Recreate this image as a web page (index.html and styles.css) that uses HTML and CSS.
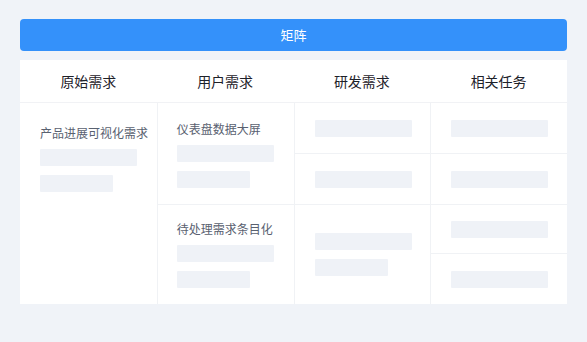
FILE: index.html
```html
<!DOCTYPE html>
<html lang="zh">
<head>
<meta charset="utf-8">
<link rel="stylesheet" href="styles.css">
</head>
<body>
<div class="page">
  <div class="bar">矩阵</div>
  <div class="matrix">
    <div class="head">
      <div class="th">原始需求</div>
      <div class="th">用户需求</div>
      <div class="th">研发需求</div>
      <div class="th">相关任务</div>
    </div>
    <div class="body">
      <div class="col">
        <div class="cell text-cell c1">
          <div class="label">产品进展可视化需求</div>
          <div class="sk long"></div>
          <div class="sk short"></div>
        </div>
      </div>
      <div class="col">
        <div class="cell text-cell c2a">
          <div class="label">仪表盘数据大屏</div>
          <div class="sk long"></div>
          <div class="sk short"></div>
        </div>
        <div class="cell text-cell c2b">
          <div class="label">待处理需求条目化</div>
          <div class="sk long"></div>
          <div class="sk short"></div>
        </div>
      </div>
      <div class="col">
        <div class="cell mid h50"><div class="sk long"></div></div>
        <div class="cell mid h51"><div class="sk long"></div></div>
        <div class="cell mid grow"><div class="sk long"></div><div class="sk short"></div></div>
      </div>
      <div class="col">
        <div class="cell mid h50"><div class="sk long"></div></div>
        <div class="cell mid h51"><div class="sk long"></div></div>
        <div class="cell mid h49"><div class="sk long"></div></div>
        <div class="cell mid grow"><div class="sk long"></div></div>
      </div>
    </div>
  </div>
</div>
</body>
</html>
```
FILE: styles.css
```css
* { box-sizing: border-box; }
html, body { margin: 0; padding: 0; }
body {
  background: #f0f3f8;
  font-family: "Noto Sans CJK SC", "Noto Sans", sans-serif;
  width: 587px;
  height: 342px;
  overflow: hidden;
}
.page {
  padding: 19px 20px 0 20px;
}
.bar {
  height: 32px;
  background: #3491fa;
  border-radius: 4px;
  color: #ffffff;
  font-size: 13px;
  line-height: 32px;
  text-align: center;
}
.matrix {
  margin-top: 9px;
  width: 547px;
  background: #ffffff;
}
.head {
  display: grid;
  grid-template-columns: repeat(4, 1fr);
  height: 43px;
  border-bottom: 1px solid #f1f2f5;
}
.th {
  display: flex;
  align-items: center;
  justify-content: center;
  font-size: 14px;
  color: #1d2129;
}
.body {
  display: grid;
  grid-template-columns: repeat(4, 1fr);
  height: 201px;
}
.col {
  display: flex;
  flex-direction: column;
  border-left: 1px solid #f0f2f5;
}
.col:first-child { border-left: none; }
.cell {
  border-top: 1px solid #f0f2f5;
  padding-left: 20px;
}
.cell:first-child { border-top: none; }
.text-cell {
  display: flex;
  flex-direction: column;
  gap: 8px;
}
.c1 { flex: 1; padding-top: 21px; }
.c2a { height: 101px; padding-top: 17px; padding-left: 19px; }
.c2b { flex: 1; padding-top: 15px; padding-left: 19px; }
.label {
  font-size: 12px;
  line-height: 17px;
  color: #596170;
  white-space: nowrap;
}
.text-cell .sk + .sk { margin-top: 1px; }
.mid {
  display: flex;
  flex-direction: column;
  justify-content: center;
  gap: 9px;
}
.h50 { height: 50px; }
.h51 { height: 51px; }
.h49 { height: 49px; }
.grow { flex: 1; }
.sk {
  height: 17px;
  background: #eff2f7;
  border-radius: 1px;
}
.long { width: 97px; }
.short { width: 73px; }
```
